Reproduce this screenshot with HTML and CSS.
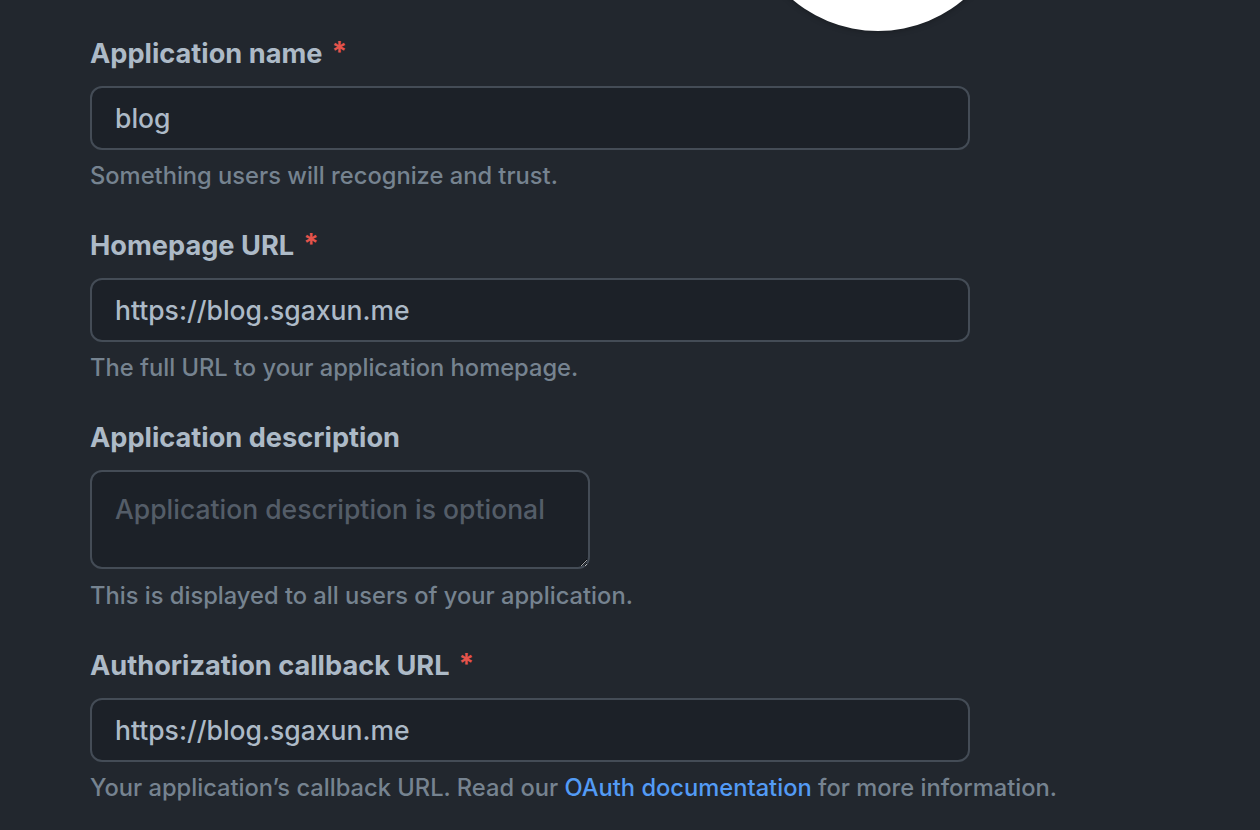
FILE: index.html
```html
<!DOCTYPE html>
<html lang="en">
<head>
<meta charset="utf-8">
<title>Register a new OAuth application</title>
<link rel="stylesheet" href="styles.css">
</head>
<body>
<div class="avatar"></div>
<form class="form">
  <div class="group">
    <label class="label" for="name">Application name <span class="req">*</span></label>
    <input class="control" id="name" type="text" value="blog">
    <p class="note">Something users will recognize and trust.</p>
  </div>
  <div class="group">
    <label class="label" for="home">Homepage URL <span class="req">*</span></label>
    <input class="control" id="home" type="text" value="https://blog.sgaxun.me">
    <p class="note">The full URL to your application homepage.</p>
  </div>
  <div class="group">
    <label class="label" for="desc">Application description</label>
    <textarea class="control area" id="desc" placeholder="Application description is optional"></textarea>
    <p class="note note-area">This is displayed to all users of your application.</p>
  </div>
  <div class="group">
    <label class="label" for="cb">Authorization callback URL <span class="req">*</span></label>
    <input class="control" id="cb" type="text" value="https://blog.sgaxun.me">
    <p class="note">Your application’s callback URL. Read our <a class="link" href="#">OAuth documentation</a> for more information.</p>
  </div>
</form>
</body>
</html>
```
FILE: styles.css
```css
html, body {
  margin: 0;
  padding: 0;
  background: #22272e;
  height: 100%;
  overflow: hidden;
}
body {
  font-family: Inter, "Liberation Sans", sans-serif;
  color: #adbac7;
}
.avatar {
  position: absolute;
  left: 746px;
  top: -233px;
  width: 264px;
  height: 264px;
  border-radius: 50%;
  background: #ffffff;
  box-shadow: 0 0 6px rgba(0, 0, 0, 0.35);
}
.form {
  padding: 30px 0 0 90px;
  margin: 0;
}
.group {
  display: flex;
  flex-direction: column;
  align-items: flex-start;
  margin-bottom: 28px;
}
.label {
  display: flex;
  align-items: center;
  font-size: 27.2px;
  font-weight: 700;
  line-height: 48px;
  height: 48px;
  color: #adbac7;
}
.req {
  color: #e5534b;
  font-size: 28px;
  margin-left: 9px;
  position: relative;
  top: -2px;
}
.control {
  box-sizing: border-box;
  margin: 8px 0 0 0;
  width: 880px;
  height: 64px;
  padding: 0 23px;
  background: #1c2128;
  border: 2px solid #444c56;
  border-radius: 12px;
  font-family: Inter, "Liberation Sans", sans-serif;
  font-size: 26.5px;
  font-weight: 500;
  color: #adbac7;
  outline: none;
}
.area {
  width: 500px;
  height: 99px;
  padding: 19px 23px;
  line-height: 36px;
  resize: vertical;
}
.area::placeholder {
  color: #545d68;
}
.note {
  margin: 8px 0 0 0;
  font-size: 23.7px;
  line-height: 36px;
  font-weight: 500;
  color: #768390;
}
.note-area {
  margin-top: 9px;
}
.link {
  color: #539bf5;
  text-decoration: none;
}
```
